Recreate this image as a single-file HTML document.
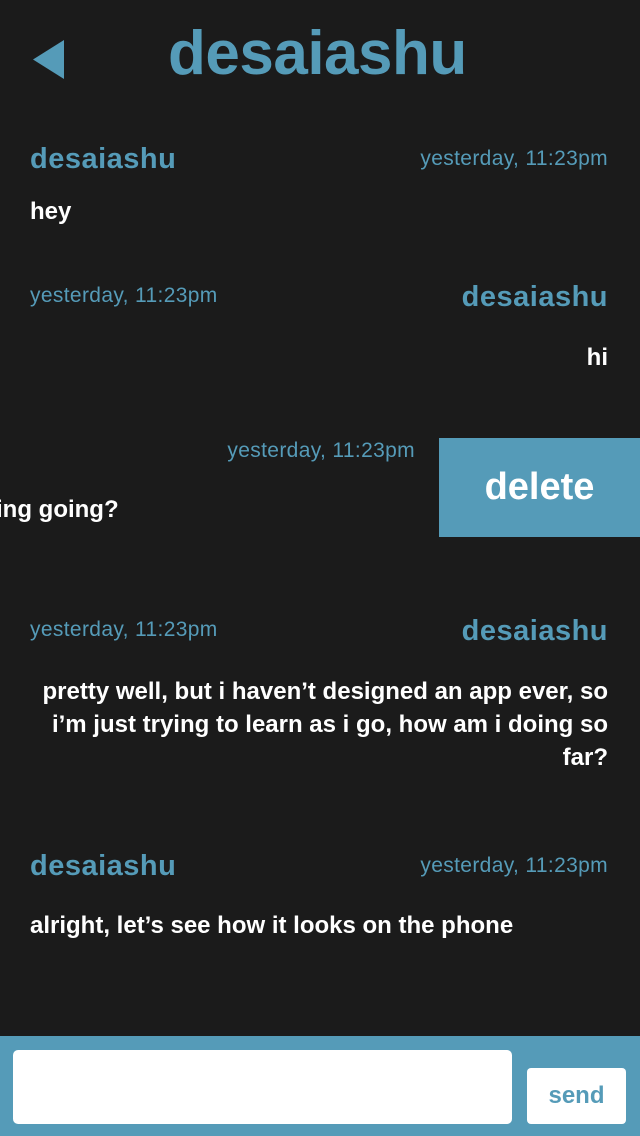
<!DOCTYPE html>
<html><head><style>
body{margin:0;width:640px;height:1136px;background:#1b1b1b;position:relative;overflow:hidden;font-family:"Liberation Sans",sans-serif}
.a{position:absolute;white-space:nowrap}
.u{color:#559bb8;font-weight:bold;font-size:29px;letter-spacing:0.5px}
.t{color:#559bb8;font-size:21px;letter-spacing:0.35px}
.m{color:#fff;font-weight:bold;font-size:24px}
</style></head><body>
<svg class="a" style="left:33px;top:40px" width="31" height="39"><polygon points="0,19.5 31,0 31,39" fill="#559bb8"/></svg>
<div class="a" style="left:168px;top:18px;font-size:62px;font-weight:bold;color:#559bb8;letter-spacing:-0.5px">desaiashu</div>

<div class="a u" style="left:30px;top:143px">desaiashu</div>
<div class="a t" style="right:32px;top:147px">yesterday, 11:23pm</div>
<div class="a m" style="left:30px;top:198px">hey</div>

<div class="a t" style="left:30px;top:284px">yesterday, 11:23pm</div>
<div class="a u" style="right:32px;top:281px">desaiashu</div>
<div class="a m" style="right:32px;top:344px">hi</div>

<div class="a t" style="right:225px;top:439px">yesterday, 11:23pm</div>
<div class="a m" style="left:-4px;top:496px">ing going?</div>
<div class="a" style="left:439px;top:438px;width:201px;height:99px;background:#559bb8;color:#fff;font-weight:bold;font-size:38px;line-height:99px;text-align:center">delete</div>

<div class="a t" style="left:30px;top:618px">yesterday, 11:23pm</div>
<div class="a u" style="right:32px;top:615px">desaiashu</div>
<div class="a m" style="right:32px;top:675px;text-align:right;line-height:33px">pretty well, but i haven’t designed an app ever, so<br>i’m just trying to learn as i go, how am i doing so<br>far?</div>

<div class="a u" style="left:30px;top:850px">desaiashu</div>
<div class="a t" style="right:32px;top:854px">yesterday, 11:23pm</div>
<div class="a m" style="left:30px;top:912px">alright, let’s see how it looks on the phone</div>

<div class="a" style="left:0;top:1036px;width:640px;height:100px;background:#559bb8"></div>
<div class="a" style="left:13px;top:1050px;width:499px;height:74px;background:#fff;border-radius:5px"></div>
<div class="a" style="left:527px;top:1068px;width:99px;height:56px;background:#fff;border-radius:4px;color:#559bb8;font-weight:bold;font-size:24px;text-align:center;line-height:56px">send</div>
</body></html>
